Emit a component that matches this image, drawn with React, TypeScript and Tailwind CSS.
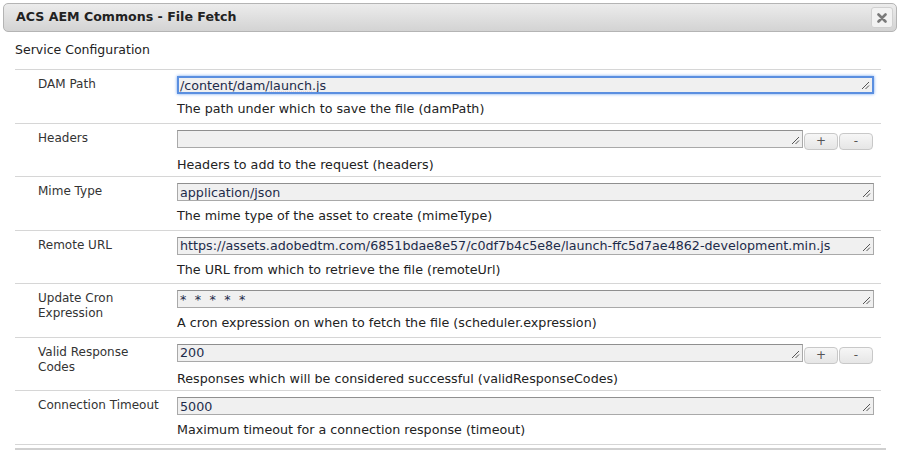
import React from "react";

interface FieldRow {
  label: string;
  value: string;
  description: string;
  multi?: boolean;
  focused?: boolean;
}

const rows: FieldRow[] = [
  {
    label: "DAM Path",
    value: "/content/dam/launch.js",
    description: "The path under which to save the file (damPath)",
    focused: true,
  },
  {
    label: "Headers",
    value: "",
    description: "Headers to add to the request (headers)",
    multi: true,
  },
  {
    label: "Mime Type",
    value: "application/json",
    description: "The mime type of the asset to create (mimeType)",
  },
  {
    label: "Remote URL",
    value:
      "https://assets.adobedtm.com/6851bdae8e57/c0df7b4c5e8e/launch-ffc5d7ae4862-development.min.js",
    description: "The URL from which to retrieve the file (remoteUrl)",
  },
  {
    label: "Update Cron Expression",
    value: "* * * * *",
    description: "A cron expression on when to fetch the file (scheduler.expression)",
  },
  {
    label: "Valid Response Codes",
    value: "200",
    description: "Responses which will be considered successful (validResponseCodes)",
    multi: true,
  },
  {
    label: "Connection Timeout",
    value: "5000",
    description: "Maximum timeout for a connection response (timeout)",
  },
];

const Grip = () => (
  <svg
    width="9"
    height="9"
    viewBox="0 0 9 9"
    className="absolute right-[2px] bottom-[2px]"
  >
    <line x1="1" y1="8" x2="8" y2="1" stroke="#555" strokeWidth="1" />
    <line x1="4.5" y1="8" x2="8" y2="4.5" stroke="#555" strokeWidth="1" />
  </svg>
);

const renderValue = (row: FieldRow) => {
  if (row.label === "DAM Path") {
    return (
      <>
        /content/dam/
        <span className="underline decoration-dotted decoration-[#e04040] underline-offset-2">
          launch
        </span>
        .js
      </>
    );
  }
  if (row.value.startsWith("*")) {
    return <span className="tracking-[2.2px]">{row.value}</span>;
  }
  return row.value;
};

const FieldInput = ({ row }: { row: FieldRow }) => {
  const box = row.focused
    ? "border-2 border-[#5b8fe0] shadow-[0_0_3px_#6fa3f0] pl-[1px]"
    : "border border-[#a9a9a9] border-t-[#8f8f8f] pl-[2px]";
  return (
    <div
      className={`relative h-[18px] bg-[#f0f0f0] ${box} flex items-center overflow-hidden whitespace-nowrap text-[12.7px] text-[#1d2b4a] ${
        row.multi ? "w-[626px]" : "w-[697px]"
      }`}
    >
      <span className="leading-[15px]">{renderValue(row)}</span>
      <Grip />
    </div>
  );
};

const SmallButton = ({ children }: { children: React.ReactNode }) => (
  <button className="h-[17px] w-[34px] rounded-[4px] border border-[#c8c8c8] bg-gradient-to-b from-[#f6f6f6] to-[#e6e6e6] text-[12px] leading-[14px] text-[#555] flex items-center justify-center">
    {children}
  </button>
);

const Row = ({ row }: { row: FieldRow }) => (
  <div className="flex h-[53.5px] border-t border-[#d6d6d6]">
    <div className="w-[162px] pl-[23px] pt-[7px] pr-2 text-[12px] leading-[15px] text-[#333]">
      {row.label}
    </div>
    <div className="flex-1 pt-[6px]">
      <div className="flex items-start">
        <FieldInput row={row} />
        {row.multi && (
          <div className="flex gap-[1px] ml-[1px] mt-[3px]">
            <SmallButton>+</SmallButton>
            <SmallButton>-</SmallButton>
          </div>
        )}
      </div>
      <div className="mt-[7px] text-[12.7px] leading-[15px] text-[#222]">
        {row.description}
      </div>
    </div>
  </div>
);

export default function App() {
  return (
    <div
      className="w-[900px] h-[450px] bg-white overflow-hidden"
      style={{ fontFamily: '"DejaVu Sans", Verdana, sans-serif' }}
    >
      <div className="pt-[3px] px-[3px]">
        <div className="h-[29px] w-[894px] rounded-[5px] border border-[#b4b4b4] bg-gradient-to-b from-[#ececec] to-[#d3d3d3] flex items-center justify-between pl-[12px] pr-[3px]">
          <span className="text-[12.6px] font-bold text-[#222]">
            ACS AEM Commons - File Fetch
          </span>
          <div className="h-[21px] w-[22px] rounded-[3px] border border-[#d0d0d0] bg-[#f2f2f2] flex items-center justify-center">
            <svg width="10" height="10" viewBox="0 0 10 10">
              <path
                d="M1.5 1.5 L8.5 8.5 M8.5 1.5 L1.5 8.5"
                stroke="#7a7a7a"
                strokeWidth="2.6"
                strokeLinecap="round"
              />
            </svg>
          </div>
        </div>
      </div>

      <div className="h-[37px] pl-[15px] pt-[10px] text-[12.5px] leading-[15px] text-[#222]">
        Service Configuration
      </div>

      <div className="ml-[15px] w-[866px]">
        {rows.map((row, index) => (
          <Row key={index} row={row} />
        ))}
        <div className="border-t border-[#d6d6d6]" />
      </div>
      <div className="ml-[15px] mt-[3px] w-[871px] h-[10px] border-t-2 border-l border-[#d0d0d0] bg-[#f6f6f6]" />
    </div>
  );
}
